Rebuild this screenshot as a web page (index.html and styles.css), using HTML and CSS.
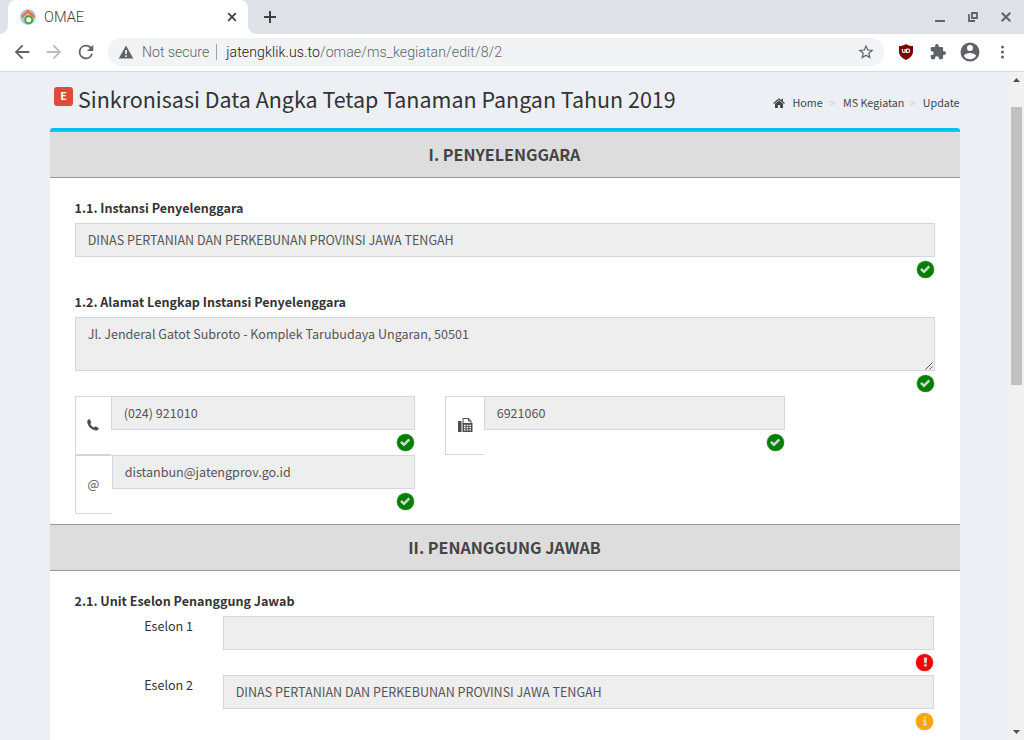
FILE: index.html
```html
<!DOCTYPE html>
<html lang="id">
<head>
<meta charset="utf-8">
<title>OMAE</title>
<link rel="stylesheet" href="styles.css">
</head>
<body>
<svg class="defs" width="0" height="0" aria-hidden="true">
  <symbol id="ok" viewBox="0 0 20 20">
    <circle cx="10" cy="10" r="9.6" fill="#b9cdb9"/>
    <circle cx="10" cy="10" r="9" fill="#008000"/>
    <path d="M5.2 9.300l3.200 3.100 5.600-5.700" fill="none" stroke="#d3d7d3" stroke-width="2.7"/>
  </symbol>
  <symbol id="err" viewBox="0 0 20 20">
    <circle cx="10" cy="10" r="9.6" fill="#d8b0b0"/>
    <circle cx="10" cy="10" r="9" fill="#f00"/>
    <path d="M9.2 4.7h3.6l-.5 6.2H9.7zM9.6 11.9h2.8v2.2H9.6z" fill="#d9d5d2"/>
  </symbol>
  <symbol id="info" viewBox="0 0 20 20">
    <circle cx="10" cy="10" r="9.6" fill="#d8ccb0"/>
    <circle cx="10" cy="10" r="9" fill="#ffa500"/>
    <path d="M9.1 4.8h2.6v2H9.1zM8.3 8h3.4v4.4h.9v1.8H8.200v-1.800h1V9.600h-.9z" fill="#d9d5d2"/>
  </symbol>
</svg>

<div class="tabstrip">
  <div class="tab">
    <svg class="favicon" width="16" height="16" viewBox="0 0 16 16">
      <circle cx="8" cy="8" r="7.800" fill="#a3c8f0"/>
      <path d="M1.500 8L8 2.200 14.500 8" fill="none" stroke="#f4772e" stroke-width="2.600"/>
      <circle cx="8.700" cy="10.800" r="3.500" fill="#fff" stroke="#4fa63a" stroke-width="2"/>
    </svg>
    <span class="tab-title">OMAE</span>
    <svg class="tab-close" width="10" height="10" viewBox="0 0 10 10"><path d="M1.200 1.200l7.600 7.600M8.800 1.200L1.200 8.800" stroke="#3c4043" stroke-width="1.700"/></svg>
  </div>
  <svg class="newtab" width="12" height="12" viewBox="0 0 12 12"><path d="M6 0v12M0 6h12" stroke="#3c4043" stroke-width="2"/></svg>
  <div class="winctl">
    <svg width="10" height="12" viewBox="0 0 10 12"><path d="M0 10h10" stroke="#5f6368" stroke-width="2"/></svg>
    <svg width="10" height="10" viewBox="0 0 10 10"><path d="M4 1h5v5H4zM1 2v7h6" fill="none" stroke="#5f6368" stroke-width="1.800"/></svg>
    <svg width="10" height="10" viewBox="0 0 10 10"><path d="M.7.7l8.600 8.600M9.300.7L.7 9.300" stroke="#5f6368" stroke-width="2"/></svg>
  </div>
</div>

<div class="toolbar">
  <div class="nav">
    <svg width="16" height="16" viewBox="3.200 3.200 17.600 17.600"><path d="M20 11H7.830l5.590-5.590L12 4l-8 8 8 8 1.410-1.410L7.830 13H20z" fill="#5f6368"/></svg>
    <svg width="16" height="16" viewBox="3.200 3.200 17.600 17.600"><path d="M12 4l-1.410 1.410L16.170 11H4v2h12.170l-5.580 5.590L12 20l8-8z" fill="#babcbe"/></svg>
    <svg width="16" height="16" viewBox="3.200 3.200 17.600 17.600"><path d="M17.650 6.350A7.960 7.960 0 0 0 12 4a8 8 0 1 0 7.730 10h-2.080A6 6 0 1 1 12 6c1.660 0 3.140.69 4.220 1.780L13 11h7V4z" fill="#5f6368"/></svg>
  </div>
  <div class="omnibox">
    <svg width="16" height="14" viewBox="0 0 16 14"><path d="M8 .5l7.300 13H.7z" fill="#5f6368"/><path d="M7.200 5h1.700v4H7.200zM7.200 10.300h1.700V12H7.200z" fill="#f1f3f4"/></svg>
    <span class="secure">Not secure</span>
    <span class="divider"></span>
    <span class="url"><span class="host">jatengklik.us.to</span>/omae/ms_kegiatan/edit/8/2</span>
    <svg class="star" width="16" height="16" viewBox="1.500 1.500 21 21"><path d="M22 9.240l-7.190-.62L12 2 9.190 8.630 2 9.240l5.460 4.730L5.820 21 12 17.270 18.180 21l-1.630-7.030zM12 15.400l-3.760 2.270 1-4.280-3.320-2.880 4.380-.38L12 6.100l1.710 4.040 4.380.38-3.320 2.880 1 4.280z" fill="#5f6368"/></svg>
  </div>
  <div class="actions">
    <svg width="16" height="16" viewBox="0 0 16 16"><path d="M8 0c2 1.500 4.500 2 7 2v5.500c0 4-3 6.500-7 8.500-4-2-7-4.500-7-8.500V2c2.500 0 5-.5 7-2z" fill="#800000"/><path d="M4.500 5v2.200a1.300 1.300 0 0 0 2.600 0V5M8.500 5v3.500H10a1.600 1.750 0 0 0 0-3.500H8.500" fill="none" stroke="#fff" stroke-width="1.200"/></svg>
    <svg width="16" height="16" viewBox="1 1 22 22"><path d="M20.500 11H19V7a2 2 0 0 0-2-2h-4V3.500a2.500 2.500 0 0 0-5 0V5H4a2 2 0 0 0-1.990 2v3.800H3.500a2.700 2.700 0 0 1 0 5.400H2V20a2 2 0 0 0 2 2h3.800v-1.500a2.700 2.700 0 0 1 5.400 0V22H17a2 2 0 0 0 2-2v-4h1.500a2.500 2.500 0 0 0 0-5z" fill="#5f6368"/></svg>
    <svg class="avatar" width="20" height="20" viewBox="2 2 20 20"><path d="M12 2.500a9.500 9.500 0 1 0 0 19 9.500 9.500 0 0 0 0-19zm0 2.500a3 3 0 1 1 0 6 3 3 0 0 1 0-6zm0 14.200a7.200 7.200 0 0 1-6-3.220c.03-1.990 4-3.080 6-3.080s5.970 1.090 6 3.080a7.200 7.200 0 0 1-6 3.220z" fill="#5f6368"/></svg>
    <svg class="menu" width="4" height="14" viewBox="0 0 4 14"><circle cx="2.500" cy="2" r="1.500" fill="#5f6368"/><circle cx="2.500" cy="7" r="1.500" fill="#5f6368"/><circle cx="2.500" cy="12" r="1.500" fill="#5f6368"/></svg>
  </div>
</div>

<div class="viewport">
  <main class="page">
    <header class="page-head">
      <span class="badge">E</span>
      <h1>Sinkronisasi Data Angka Tetap Tanaman Pangan Tahun 2019</h1>
      <nav class="crumbs">
        <svg width="12" height="10" viewBox="0 0 12 10"><path d="M6 2.500l4 3.300V10H7.100V7H4.900v3H2V5.800z" fill="#444"/><path d="M.5 5.500L6 1l5.500 4.500" fill="none" stroke="#444" stroke-width="1.200"/><path d="M8.500.7H10v3L8.500 2.500z" fill="#444"/></svg>
        <span class="crumb home">Home</span><span class="sep">&gt;</span><span class="crumb">MS Kegiatan</span><span class="sep second">&gt;</span><span class="crumb">Update</span>
      </nav>
    </header>

    <section class="box">
      <h2 class="band">I. PENYELENGGARA</h2>
      <div class="body">
        <label class="lbl">1.1. Instansi Penyelenggara</label>
        <div class="field spaced">
          <div class="input">DINAS PERTANIAN DAN PERKEBUNAN PROVINSI JAWA TENGAH</div>
          <svg class="status"><use href="#ok"/></svg>
        </div>
        <label class="lbl">1.2. Alamat Lengkap Instansi Penyelenggara</label>
        <div class="field">
          <div class="input area">Jl. Jenderal Gatot Subroto - Komplek Tarubudaya Ungaran, 50501
            <svg class="grip" width="9" height="9" viewBox="0 0 9 9"><path d="M.5 8.500l7-7M4.500 8.500l3-3" stroke="#555" stroke-width="1"/></svg>
          </div>
          <svg class="status"><use href="#ok"/></svg>
        </div>
        <div class="contacts">
          <div class="group">
            <div class="addon"><svg width="12" height="12" viewBox="0 0 12 12"><path d="M.3 1.800C.8.700 1.800.3 2.700.3l1.700 3.200L3.300 4.900c.8 1.600 2 2.800 3.800 3.700l1.400-1.300 3.200 1.700c0 1-.4 1.800-1.200 2.200C7.300 12.400-.2 8 .3 1.800z" fill="#4d4d4d"/></svg></div>
            <div class="field grow"><div class="input">(024) 921010</div><svg class="status"><use href="#ok"/></svg></div>
          </div>
          <div class="group">
            <div class="addon fax"><svg width="15" height="14" viewBox="0 0 15 14"><path d="M0 3h3.500v11H0z" fill="#4d4d4d"/><path d="M5 5.500V.5h5.500L13 2.700v2.800" fill="#fff" stroke="#4d4d4d"/><path d="M10.500.5V3H13" fill="none" stroke="#4d4d4d"/><path d="M4.500 5H14.500v9h-10z" fill="#4d4d4d"/><path d="M6 7.500h7M6 9.700h7M6 11.900h7" stroke="#fff" stroke-width="1.300" stroke-dasharray="1.600 1.100"/></svg></div>
            <div class="field grow"><div class="input">6921060</div><svg class="status"><use href="#ok"/></svg></div>
          </div>
          <div class="group">
            <div class="addon at">@</div>
            <div class="field grow"><div class="input">distanbun@jatengprov.go.id</div><svg class="status"><use href="#ok"/></svg></div>
          </div>
        </div>
      </div>

      <h2 class="band">II. PENANGGUNG JAWAB</h2>
      <div class="body">
        <label class="lbl">2.1. Unit Eselon Penanggung Jawab</label>
        <div class="row">
          <span class="side">Eselon 1</span>
          <div class="field grow"><div class="input"></div><svg class="status"><use href="#err"/></svg></div>
        </div>
        <div class="row">
          <span class="side">Eselon 2</span>
          <div class="field grow"><div class="input">DINAS PERTANIAN DAN PERKEBUNAN PROVINSI JAWA TENGAH</div><svg class="status"><use href="#info"/></svg></div>
        </div>
      </div>
    </section>
  </main>
  <div class="scrollbar">
    <svg width="7" height="4" viewBox="0 0 7 4"><path d="M3.500 0L7 4H0z" fill="#505050"/></svg>
    <div class="thumb"></div>
    <svg class="down" width="7" height="4" viewBox="0 0 7 4"><path d="M0 0h7L3.500 4z" fill="#505050"/></svg>
  </div>
</div>
</body>
</html>
```
FILE: styles.css
```css
* { box-sizing: border-box; }
body {
  margin: 0;
  width: 1024px;
  height: 740px;
  overflow: hidden;
  display: flex;
  flex-direction: column;
  font: 12.55px/20px "Noto Sans CJK SC", "Open Sans", sans-serif;
  color: #333;
  background: #ecf0f5;
}
svg { display: block; flex: none; }
.defs { position: absolute; }
h1, h2 { margin: 0; }
span { white-space: nowrap; }

.tabstrip {
  height: 34px;
  flex: none;
  display: flex;
  align-items: center;
  background: #dee1e6;
  font-family: Roboto, sans-serif;
}
.tab {
  position: relative;
  width: 240px;
  height: 34px;
  margin-left: 8px;
  padding: 0 11px 0 12px;
  display: flex;
  align-items: center;
  background: #fff;
  border-radius: 8px 8px 0 0;
}
.tab::before, .tab::after {
  content: "";
  position: absolute;
  bottom: 0;
  width: 8px;
  height: 8px;
}
.tab::before { left: -8px; background: radial-gradient(circle at 0 0, transparent 7.5px, #fff 8px); }
.tab::after { right: -8px; background: radial-gradient(circle at 100% 0, transparent 7.5px, #fff 8px); }
.tab-title { margin-left: 8px; font-size: 14.6px; font-weight: 300; color: #3c4043; }
.tab-close { margin-left: auto; }
.newtab { margin-left: 16px; }
.winctl { margin-left: auto; margin-right: 13px; display: flex; gap: 23px; align-items: center; }

.toolbar {
  height: 38px;
  flex: none;
  display: flex;
  align-items: center;
  padding-bottom: 1px;
  background: #fff;
  border-bottom: 1px solid #d5d8dc;
  font: 300 14.1px/20px Roboto, sans-serif;
}
.nav { display: flex; gap: 16px; margin-left: 14px; }
.omnibox {
  width: 776px;
  height: 28px;
  margin-left: 14px;
  padding: 0 10px;
  display: flex;
  align-items: center;
  background: #f1f3f4;
  border-radius: 14px;
}
.secure { margin-left: 8px; color: #5f6368; }
.divider { width: 1px; height: 16px; margin: 0 9px 0 7px; background: #9aa0a6; }
.url { color: #5f6368; letter-spacing: .09px; }
.host { color: #202124; }
.star { margin-left: auto; }
.actions { display: flex; align-items: center; gap: 16px; margin-left: 14px; }
.avatar { margin-left: -2px; }
.menu { margin-left: 4px; }

.viewport { flex: 1; min-height: 0; display: flex; }
.page { width: 1009px; padding: 0 49px 0 50px; overflow: hidden; }
.page-head { height: 56px; display: flex; align-items: flex-start; padding-left: 4px; }
.badge {
  width: 19px;
  height: 19px;
  margin-top: 15px;
  border-radius: 3px;
  background: #dd4b39;
  color: #fff;
  font-size: 10.8px;
  font-weight: 700;
  line-height: 17px;
  text-align: center;
}
h1 { margin: 11px 0 0 5px; font-size: 21.48px; font-weight: 400; line-height: 32px; white-space: nowrap; }
.crumbs { margin: 21px .5px 0 auto; display: flex; align-items: center; font-size: 10.74px; color: #444; }
.home { margin-left: 7px; }
.sep { margin: 0 7.5px 0 7px; color: #ccc; font-size: 10.5px; }
.second { margin-left: 5px; }

.box { width: 910px; height: 640px; background: #fff; border-top: 3px solid #00c0ef; border-radius: 3px; box-shadow: 0 1px 1px rgba(0,0,0,.1); }
.band {
  height: 47px;
  padding-right: 1px;
  border: solid #999;
  border-width: 1px 0;
  background: #ddd;
  color: #444;
  font-size: 16.1px;
  font-weight: 700;
  line-height: 44px;
  text-align: center;
}
.body { padding: 20px 25px 10px; }
.lbl { display: block; height: 20px; margin: 0 0 5px -.5px; font-weight: 700; }
.field { display: flex; flex-direction: column; }
.spaced { margin-bottom: 10px; }
.grow { flex: 1; }
.input { height: 34px; padding: 6px 11.7px; border: 1px solid #d2d6de; background: #eee; color: #555; }
.area { position: relative; height: 54px; }
.grip { position: absolute; right: 0; bottom: 0; }
.status { width: 19px; height: 19px; margin: 3px 0; align-self: flex-end; }
.area + .status, .spaced .status, .grow .status { margin-bottom: 3px; }
.field::after { content: ""; height: 0; }
.contacts { display: grid; grid-template-columns: 340px 340px; column-gap: 30px; }
.group { display: flex; height: 59px; }
.field { height: 59px; }
.field:has(.area) { height: 79px; }
.addon {
  width: 36px;
  padding: 0 1px 2px 0;
  display: flex;
  align-items: center;
  justify-content: center;
  border: 1px solid #d2d6de;
  border-right: 0;
  color: #555;
}
.fax { width: 39px; padding-right: 0; }
.at { width: 37px; }
.row { display: flex; }
.side { width: 118px; margin-right: 30px; text-align: right; }
.body .row { margin-right: 1px; }

.scrollbar { width: 15px; padding: 6px 2px; display: flex; flex-direction: column; align-items: center; background: #f1f1f1; }
.thumb { width: 11px; height: 278px; margin-top: 25px; background: #c1c1c1; }
.down { margin-top: auto; }
```
